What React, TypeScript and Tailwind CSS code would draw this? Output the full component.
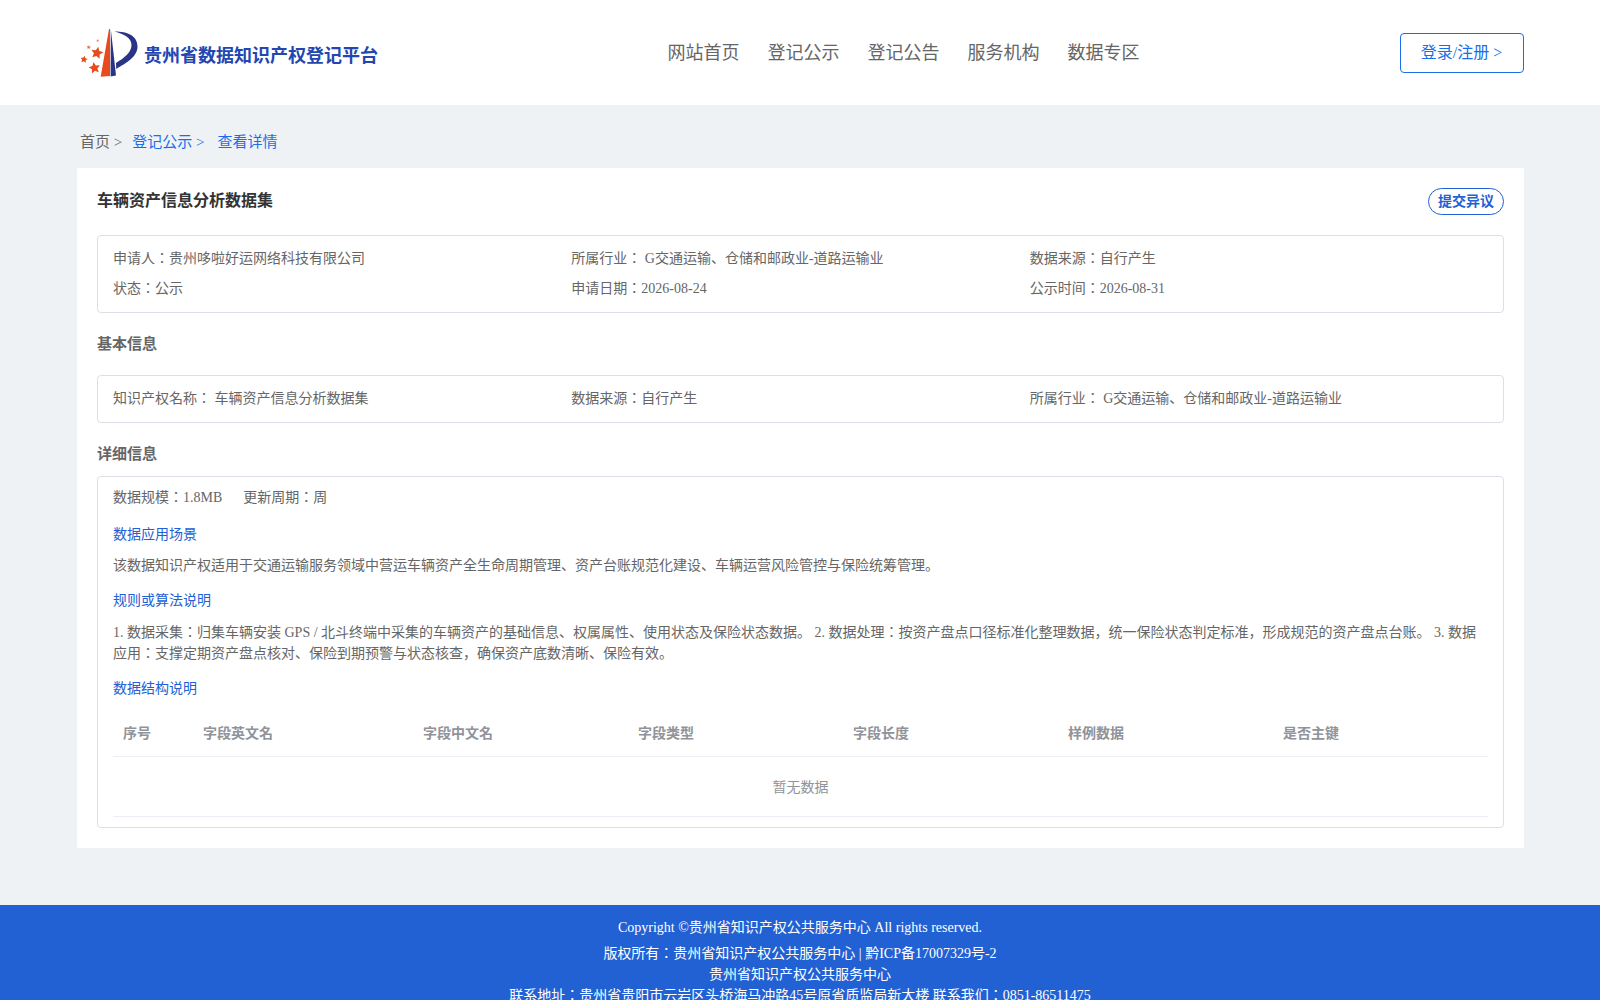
const FONT = "font-['Liberation_Serif','Noto_Sans_CJK_JP',serif]";

function starPoints(cx: number, cy: number, r: number, rot: number) {
  const pts: string[] = [];
  for (let i = 0; i < 10; i++) {
    const radius = i % 2 === 0 ? r : r * 0.48;
    const a = ((-90 + rot + i * 36) * Math.PI) / 180;
    pts.push(`${(cx + radius * Math.cos(a)).toFixed(2)},${(cy + radius * Math.sin(a)).toFixed(2)}`);
  }
  return pts.join(" ");
}

function Logo() {
  return (
    <svg width="60" height="50" viewBox="0 0 60 50" className="shrink-0">
      <path d="M29 1 L30 1 L30 48 L20.7 48.7 Z" fill="#e8491d" />
      <path d="M30.8 1 L36 47.5 L30.6 48.5 Z" fill="#2a3487" />
      <path d="M34.5 3.5 C48 3.5 57.5 8 57.5 18.5 C57.5 29 46 35 36.2 41 L36 35 C44 30 51.5 24.5 51.5 17 C51.5 10 44 6 34.5 3.5 Z" fill="#2a3487" />
      <polygon points={starPoints(17, 25, 6.4, 12)} fill="#e8491d" />
      <polygon points={starPoints(14.5, 40, 6, -10)} fill="#e8491d" />
      <polygon points={starPoints(4, 31.5, 3.8, 10)} fill="#e8491d" />
      <polygon points={starPoints(8.7, 19.3, 2.2, 10)} fill="#ec6a45" />
      <circle cx="17.7" cy="12.7" r="1.1" fill="#ee8a6c" />
    </svg>
  );
}

function InfoRow({ items }: { items: string[] }) {
  return (
    <div className="grid grid-cols-3 h-[30px] items-center">
      {items.map((t) => (
        <div key={t}>{t}</div>
      ))}
    </div>
  );
}

function Box({ children, className = "" }: { children: React.ReactNode; className?: string }) {
  return <div className={`border border-[#dcdfe6] rounded-[4px] px-[15px] text-sm text-[#666] ${className}`}>{children}</div>;
}

const columns = ["序号", "字段英文名", "字段中文名", "字段类型", "字段长度", "样例数据", "是否主键"];

export default function App() {
  return (
    <div className={`${FONT} bg-[#eff2f5] min-h-screen`}>
      <header className="bg-white h-[105px] pl-[77px] pr-[76px] flex items-center justify-between">
        <div className="flex items-center w-[600px]">
          <div className="pl-[3px] pr-[4px] pt-[1px]"><Logo /></div>
          <span className="text-lg font-bold text-[#2346b0] font-['Noto_Sans_CJK_JP',sans-serif] leading-[26px] mt-[2px]">贵州省数据知识产权登记平台</span>
        </div>
        <nav className="flex gap-7 text-lg text-[#666] -ml-[270px]">
          {["网站首页", "登记公示", "登记公告", "服务机构", "数据专区"].map((n) => (
            <span key={n}>{n}</span>
          ))}
        </nav>
        <button className="w-[124px] h-10 pt-[1px] pr-[1px] border border-[#1a6fe8] rounded-[4px] text-base text-[#1a6fe8]">登录/注册 &gt;</button>
      </header>

      <main className="pl-[77px] pr-[76px] pb-[57px]">
        <div className="h-[63px] flex items-center pl-[3px] pt-[12px] text-[15px] text-[#1a6fe8]">
          <span className="text-[#666] mr-[10px]">首页 &gt;</span>
          <span className="mr-[13px]">登记公示 &gt;</span>
          <span>查看详情</span>
        </div>

        <section className="bg-white px-5 pt-5 pb-5">
          <div className="flex justify-between items-start h-[47px]">
            <h1 className="text-base font-bold text-[#333] leading-6 pt-[1px]">车辆资产信息分析数据集</h1>
            <button className="h-[27px] w-[76px] border border-[#2261d3] rounded-[14px] text-sm font-bold text-[#2261d3]">提交异议</button>
          </div>

          <Box className="py-2">
            <InfoRow items={["申请人：贵州哆啦好运网络科技有限公司", "所属行业： G交通运输、仓储和邮政业-道路运输业", "数据来源：自行产生"]} />
            <InfoRow items={["状态：公示", "申请日期：2026-08-24", "公示时间：2026-08-31"]} />
          </Box>

          <h2 className="text-[15px] font-bold text-[#666] h-[62px] flex items-center">基本信息</h2>

          <Box className="py-2">
            <InfoRow items={["知识产权名称： 车辆资产信息分析数据集", "数据来源：自行产生", "所属行业： G交通运输、仓储和邮政业-道路运输业"]} />
          </Box>

          <h2 className="text-[15px] font-bold text-[#666] h-[53px] flex items-center pt-[9px]">详细信息</h2>

          <Box className="pb-[10px]">
            <div className="h-[41px] flex items-center gap-[21px]">
              <span>数据规模：1.8MB</span>
              <span>更新周期：周</span>
            </div>
            <h3 className="text-[#2261d3] leading-5 mt-[7px]">数据应用场景</h3>
            <p className="leading-[21px] mt-[10px]">该数据知识产权适用于交通运输服务领域中营运车辆资产全生命周期管理、资产台账规范化建设、车辆运营风险管控与保险统筹管理。</p>
            <h3 className="text-[#2261d3] leading-5 mt-[15px]">规则或算法说明</h3>
            <p className="leading-[21px] mt-[11px]">1. 数据采集：归集车辆安装 GPS / 北斗终端中采集的车辆资产的基础信息、权属属性、使用状态及保险状态数据。 2. 数据处理：按资产盘点口径标准化整理数据，统一保险状态判定标准，形成规范的资产盘点台账。 3. 数据应用：支撑定期资产盘点核对、保险到期预警与状态核查，确保资产底数清晰、保险有效。</p>
            <h3 className="text-[#2261d3] leading-5 mt-[15px]">数据结构说明</h3>
            <div className="mt-[13px]">
              <div className="grid grid-cols-[80px_220px_repeat(5,1fr)] h-[45px] items-center font-bold text-[#909399] border-b border-[#ebeef5]">
                {columns.map((c) => (
                  <div key={c} className="px-[10px]">{c}</div>
                ))}
              </div>
              <div className="h-[60px] flex items-center justify-center pt-[2px] text-[#909399] border-b border-[#ebeef5]">暂无数据</div>
            </div>
          </Box>
        </section>
      </main>

      <footer className="bg-[#2261d3] text-white text-sm text-center leading-[21px] pt-[12px] pb-3">
        <p className="mb-[5px]">Copyright ©贵州省知识产权公共服务中心 All rights reserved.</p>
        <p>版权所有：贵州省知识产权公共服务中心 | 黔ICP备17007329号-2</p>
        <p>贵州省知识产权公共服务中心</p>
        <p>联系地址：贵州省贵阳市云岩区头桥海马冲路45号原省质监局新大楼 联系我们：0851-86511475</p>
      </footer>
    </div>
  );
}
